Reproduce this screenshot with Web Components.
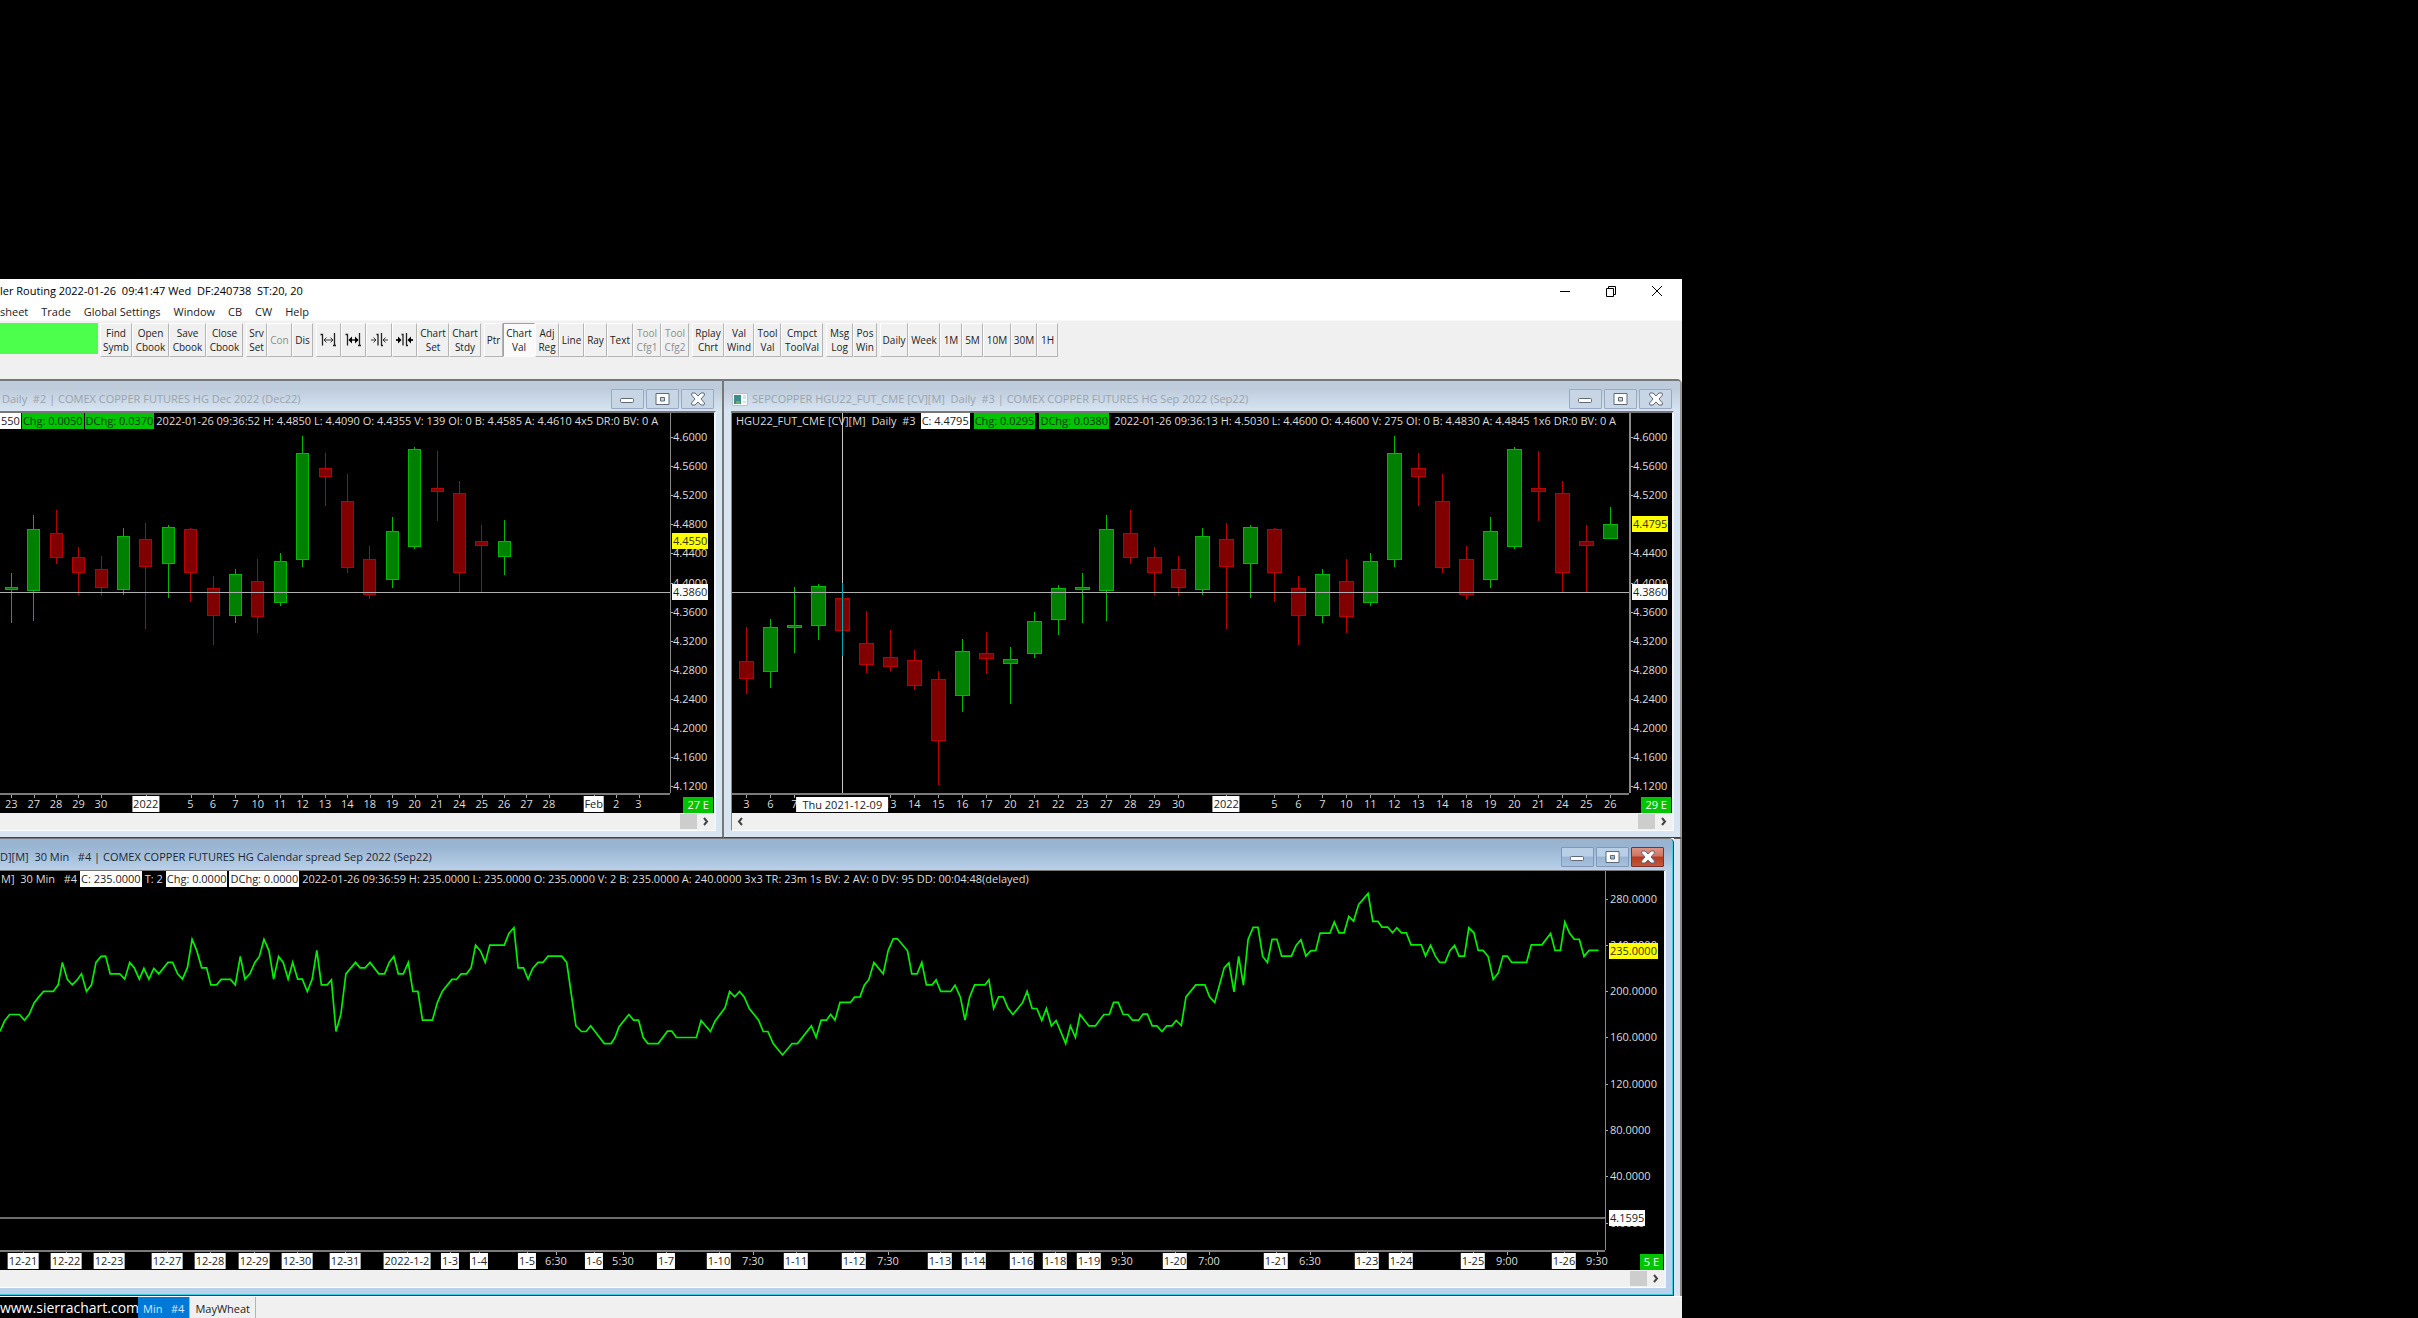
<!DOCTYPE html>
<html lang="en">
<head>
<meta charset="utf-8">
<title>Sierra Chart</title>
<style>
  body { margin: 0; background: #000; font: 11px/14px "Open Sans", "Noto Sans", sans-serif; color: #222; }
</style>
</head>
<body>
<trading-desktop>
  <title-bar slot="bar">ler Routing 2022-01-26&nbsp; 09:41:47 Wed&nbsp; DF:240738&nbsp; ST:20, 20</title-bar>
  <menu-bar slot="bar"></menu-bar>
  <tool-bar slot="bar"></tool-bar>
  <mdi-window slot="left" caption="Daily&nbsp; #2 | COMEX COPPER FUTURES HG Dec 2022 (Dec22)">
    <price-chart data-chart="dec"></price-chart>
  </mdi-window>
  <mdi-window slot="right" framed icon caption="SEPCOPPER HGU22_FUT_CME [CV][M]&nbsp; Daily&nbsp; #3 | COMEX COPPER FUTURES HG Sep 2022 (Sep22)">
    <price-chart data-chart="sep"></price-chart>
  </mdi-window>
  <mdi-window slot="bottom" active caption="D][M]&nbsp; 30 Min&nbsp;&nbsp; #4 | COMEX COPPER FUTURES HG Calendar spread Sep 2022 (Sep22)">
    <price-chart data-chart="spread"></price-chart>
  </mdi-window>
  <tab-bar slot="tabs"></tab-bar>
</trading-desktop>

<script>
class Base extends HTMLElement {
  paint(html) {
    if (!this.shadowRoot) this.attachShadow({ mode: 'open' });
    this.shadowRoot.innerHTML = html;
  }
}

customElements.define('trading-desktop', class extends Base {
  connectedCallback() {
    this.paint(`<style>
      :host { display: grid; grid-template-columns: 1682fr 736fr; grid-template-rows: 279fr 1039fr; min-height: 100vh; background: #000; }
      main { grid-row: 2; display: flex; flex-direction: column; min-width: 0; background: #f0f0f0; overflow: hidden; }
      .mdi { flex: 1; display: grid; grid-template-columns: 724fr 958fr; grid-template-rows: 1fr 1fr; min-height: 0; border-bottom: 1px solid #fff; }
      .wide { grid-column: 1 / -1; display: flex; min-width: 0; min-height: 0; }
      .wide slot::slotted(*) { flex: 1; }
      .behind { width: 6px; background: #d9e5f2; border-right: 2px solid #8c8c8c; border-top: 1px solid #555; }
    </style>
    <main>
      <slot name="bar"></slot>
      <div class="mdi">
        <slot name="left"></slot><slot name="right"></slot>
        <div class="wide"><slot name="bottom"></slot><div class="behind"></div></div>
      </div>
      <slot name="tabs"></slot>
    </main>`);
  }
});

customElements.define('title-bar', class extends Base {
  connectedCallback() {
    this.paint(`<style>
      :host { display: flex; align-items: center; height: 24px; padding-right: 2px; background: #fff; color: #000; white-space: nowrap; }
      span { flex: 1; }
      button { width: 46px; height: 24px; padding: 0; border: 0; background: none; display: grid; place-items: center; }
      svg { fill: none; stroke: #000; }
    </style>
    <span><slot></slot></span>
    <button aria-label="Minimize"><svg width="12" height="12"><path d="M1 6.5h10"/></svg></button>
    <button aria-label="Restore"><svg width="12" height="12"><path d="M1.5 3.5h7v8h-7zM3.5 3.5v-2h7v8h-2"/></svg></button>
    <button aria-label="Close"><svg width="12" height="12"><path d="M1 1l10 10M11 1L1 11"/></svg></button>`);
  }
});

customElements.define('menu-bar', class extends Base {
  connectedCallback() {
    const items = ['sheet', 'Trade', 'Global Settings', 'Window', 'CB', 'CW', 'Help'];
    this.paint(`<style>
      :host { display: block; background: #fff; border-bottom: 1px solid #f7f7f7; }
      nav { display: flex; gap: 13px; height: 16px; padding-top: 1px; }
      button { font: inherit; color: #222; padding: 0; border: 0; background: none; white-space: nowrap; }
    </style><nav>${items.map(i => `<button>${i}</button>`).join('')}</nav>`);
  }
});

const scaleIcon = inner => `<svg width="17" height="18" viewBox="0 0 17 18" fill="none" stroke="#222">${inner}</svg>`;
const ICONS = {
  widen: scaleIcon('<path d="M0.5 3.5h2v11M14.5 2v12.5M16 14.5h-3" stroke-width="1.3"/><path d="M4 9h9M6.5 6.5L4 9l2.500 2.500M10.500 6.500L13 9l-2.500 2.500" stroke-width=".9"/>'),
  widenBold: scaleIcon('<path d="M0.5 3.5h2v11M14.5 2v12.5M16 14.5h-3" stroke-width="1.3"/><path d="M4 9h9" stroke-width="1.5"/><path d="M3.500 9l3.500-3.500v7zM13.500 9L10 5.500v7z" fill="#000" stroke="none"/>'),
  narrow: scaleIcon('<path d="M5.500 3.500h1.500v11M10.500 2v12.500M12 14.500h-2" stroke-width="1.3"/><path d="M0 9h5M2.500 6.500L5 9l-2.500 2.500M17 9h-5M14.500 6.500L12 9l2.500 2.500" stroke-width=".9"/>'),
  narrowBold: scaleIcon('<path d="M5.500 3.500h1.500v11M10.500 2v12.500M12 14.500h-2" stroke-width="1.3"/><path d="M0 9h3M17 9h-3" stroke-width="2"/><path d="M5.500 9L2 5.500v7zM11.500 9L15 5.500v7z" fill="#000" stroke="none"/>')
};

customElements.define('tool-bar', class extends Base {
  connectedCallback() {
    const groups = [
      [['Find|Symb', 32], ['Open|Cbook', 37], ['Save|Cbook', 37], ['Close|Cbook', 37]],
      [['Srv|Set', 21], ['Con', 25, 'off'], ['Dis', 21]],
      [['*widen', 25], ['*widenBold', 25], ['*narrow', 26], ['*narrowBold', 25], ['Chart|Set', 32], ['Chart|Stdy', 32]],
      [['Ptr', 19], ['Chart|Val', 32, 'on'], ['Adj|Reg', 24], ['Line', 25], ['Ray', 23], ['Text', 26], ['Tool|Cfg1', 28, 'off'], ['Tool|Cfg2', 28, 'off']],
      [['Rplay|Chrt', 32], ['Val|Wind', 30], ['Tool|Val', 27], ['Cmpct|ToolVal', 42]],
      [['Msg|Log', 27], ['Pos|Win', 24]],
      [['Daily', 28], ['Week', 32], ['1M', 22], ['5M', 21], ['10M', 28], ['30M', 26], ['1H', 21]]
    ];
    const button = ([t, w, state]) => {
      const body = t[0] === '*' ? ICONS[t.slice(1)] : t.replace('|', '<br>');
      return `<button class="${state || ''}" style="width:${w}px" ${state === 'off' ? 'disabled' : ''} ${t[0] === '*' ? `aria-label="${t.slice(1)}"` : ''}>${body}</button>`;
    };
    this.paint(`<style>
      :host { display: flex; gap: 3px; height: 56px; padding-top: 2px; align-items: flex-start; background: #f0f0f0; }
      .status { width: 98px; height: 31px; background: #4dff4d; margin-right: -1px; }
      .group { display: flex; }
      button { box-sizing: border-box; height: 34px; padding: 0; border: 1px solid; border-color: #fdfdfd #b4b4b4 #b4b4b4 #fdfdfd; background: #f0f0f0;
        font: inherit; font-size: 10px; color: #222; white-space: nowrap; display: flex; align-items: center; justify-content: center; text-align: center; }
      .off { color: #8d8d8d; }
      .on { background: #fafafa; border-color: #a0a0a0 #fafafa #fafafa #a0a0a0; }
    </style>
    <div class="status"></div>${groups.map(g => `<div class="group">${g.map(button).join('')}</div>`).join('')}`);
  }
});

customElements.define('mdi-window', class extends Base {
  connectedCallback() {
    const icon = this.hasAttribute('icon')
      ? '<svg width="16" height="14"><path d="M.5.500h15v12H.5z" fill="#f8f8f8" stroke="#b8c2cc"/><path d="M2 2h7v9H2z" fill="#3c8c8c"/><path d="M4 8h4v3H4z" fill="#64b464"/><path d="M11 3h3M11 5h3M11 9h3" stroke="#c0c8d0"/></svg>' : '';
    const ink = 'fill="#fff" stroke="#5d6878"';
    this.paint(`<style>
      :host { --frame: #d7e4f2; --top: #bdcbdb; --text: #9ba3ac;
        display: flex; flex-direction: column; min-width: 0; min-height: 0; box-sizing: border-box; overflow: hidden;
        border-top: 2px solid #777; border-right: 2px solid #777; border-bottom: 1px solid #444; background: var(--frame); padding: 0 6px 6px 0; }
      :host([framed]) { padding-left: 7px; border-top-right-radius: 5px; border-right-color: #999; }
      :host([active]) { --frame: #b9d1ea; --top: #99b4d1; --text: #1c2733; border-top-width: 1px; border-right: 1px solid #2b4652; border-bottom: 1px solid #2b4652;
        box-shadow: inset -1px -1px #43cbe0; padding: 0 7px 7px 0; border-top-right-radius: 5px; }
      header { display: flex; gap: 2px; height: 30px; margin-right: -6px; padding-right: 8px; background: linear-gradient(var(--top), var(--top) 25%, var(--frame)); }
      :host([framed]) header { margin-left: -7px; padding-left: 8px; }
      :host([active]) header { height: 31px; }
      h2 { flex: 1; margin: 0; font: inherit; line-height: 36px; color: var(--text); white-space: nowrap; padding-left: 2px; }
      :host([active]) h2 { padding-left: 0; }
      header > svg { margin-top: 12px; }
      button { box-sizing: border-box; width: 33px; height: 20px; margin-top: 8px; padding: 0; border: 1px solid #98a9c2; border-radius: 1px; background: #c8d5e4; display: grid; place-items: center; }
      :host([active]) button { background: linear-gradient(#b9cfe6 45%, #98b4d2 50%, #a6c1dd); border-color: #8098b8; }
      :host([active]) button.close { background: linear-gradient(#dd9484, #cf7463 45%, #b43a20 50%, #c4593a); border-color: #7c3038; }
      .client { flex: 1; display: flex; flex-direction: column; min-height: 0; border-top: 2px solid #777; border-right: 2px solid #f1f5fa; border-bottom: 1px solid #fff; }
      :host([framed]) .client { border-left: 1px solid #888; }
      :host([active]) .client { border-top-width: 1px; }
      .chart { flex: 1; display: flex; min-height: 0; }
      slot::slotted(*) { flex: 1; min-width: 0; }
    </style>
    <header>${icon}<h2>${this.getAttribute('caption')}</h2>
      <button aria-label="Minimize"><svg width="15" height="14"><rect x=".5" y="6.500" width="13" height="4" rx="1" ${ink}/></svg></button>
      <button aria-label="Maximize"><svg width="15" height="14"><path fill-rule="evenodd" d="M1 1.500h13v11H1zM5.500 5.500v3.500h4V5.500z" ${ink}/></svg></button>
      <button class="close" aria-label="Close"><svg width="16" height="14"><path d="M2 1h3l3 3 3-3h3l.5 2L11 7l3.500 4-.5 2h-3L8 10l-3 3H2l-.5-2L5 7 1.500 3z" ${ink}/></svg></button>
    </header>
    <div class="client"><div class="chart"><slot></slot></div><scroll-strip ${this.hasAttribute('framed') ? 'start' : ''}></scroll-strip></div>`);
  }
});

customElements.define('scroll-strip', class extends Base {
  connectedCallback() {
    const chevron = d => `<svg width="7" height="9"><path d="${d}" fill="none" stroke="#444" stroke-width="2"/></svg>`;
    this.paint(`<style>
      :host { display: flex; height: 17px; flex: none; background: #f0f0f0; align-items: center; }
      button { width: 17px; height: 17px; padding: 0; border: 0; background: none; display: grid; place-items: center; }
      .track { flex: 1; display: flex; justify-content: flex-end; }
      .thumb { width: 17px; height: 15px; background: #cdcdcd; }
    </style>
    ${this.hasAttribute('start') ? `<button aria-label="Scroll left">${chevron('M5 1L2 4.500L5 8')}</button>` : ''}
    <div class="track"><div class="thumb"></div></div>
    <button aria-label="Scroll right">${chevron('M2 1l3 3.500L2 8')}</button>`);
  }
});

/* Daily bars: direction, high, body top, body bottom, low (thirds of a pixel below the top label). */
const BARS = `r621,722,776,822 g597,622,755,803 g501,616,623,698 g492,499,618,659 r489,535,632,707 r573,670,734,759
r630,712,740,753 r690,720,797,809 r753,778,962,1095 g657,694,827,875 r636,700,716,762 g681,718,731,852
g576,603,702,714 g496,504,599,644 g460,502,509,608 g285,328,513,604 r270,340,413,433 r381,412,459,524
r408,448,503,529 g324,348,509,525 r309,357,440,626 g314,321,433,533 r325,328,458,546 r468,505,587,674
g448,463,587,609 r417,483,592,638 g400,423,548,558 g48,100,419,440 r100,144,170,258 r162,242,443,458
r378,418,524,536 g291,334,479,504 g81,88,380,388 r93,205,217,302 r184,220,460,516 r316,364,377,518`.split(/\s+/);

const dailyPrices = skip => Array.from({ length: 13 }, (_, i) => 4.6 - i * 0.04)
  .filter(p => Math.abs(p - skip) > 0.001).map(p => [p.toFixed(4), 24 + (4.6 - p) * 726.5]);

const candles = (bars, x0, step, w) => bars.map((b, i) => {
  const [h, t, bt, l] = b.slice(1).split(',').map(v => Math.round(7 + v / 3));
  const cx = Math.round(x0 + i * step), up = b[0] === 'g';
  const line = up ? '#00b800' : '#b80000', fill = up ? '#008000' : '#800000';
  return `<path d="M${cx + .5} ${h}V${l}" stroke="${line}"/><rect x="${cx - (w - 1) / 2 + .5}" y="${t + .5}" width="${w - 1}" height="${Math.max(1, bt - t - 1)}" fill="${fill}" stroke="${line}"/>`;
}).join('');

const SPREAD = [
  [0, 2.6133, `0,604 12,572 25,553 51,553 64,570 76,553 89,518 101,501 114,484 139,484 152,464 163,397 176,448 189,464 201,450 213,431 226,484 239,464 251,397 264,379 276,378 288,431 313,431 326,447 339,397 351,413 364,447 376,415 389,447 402,415 415,431 439,397 451,397 464,431 477,447 490,412 502,328 514,361 527,413 540,413 551,464 566,464 578,448 602,448 615,464 628,379 640,447 653,431 666,397 678,379 690,328 703,362 715,447 728,379 740,397 753,447 765,397 778,447 790,447 803,484 816,447 828,361 840,464 855,464 866,449 878,604 891,552 904,431 929,397 941,413 954,413 967,397 990,431 1005,431 1017,397 1029,379 1041,431 1054,431 1067,397 1079,484 1092,484 1104,570 1130,570 1143,517 1156,483 1181,448 1193,448 1205,431 1219,431 1231,413 1243,345 1256,363 1268,397 1280,345 1318,345 1330,310 1343,293 1354,413 1368,413 1380,447 1392,415 1406,397 1419,397 1432,378 1468,378 1481,397 1494,500 1505,587`],
  [580, 2.8, `4,604 17,604 30,587 42,604 68,640 87,640 98,622 109,590 137,553 150,570 164,570 177,622 190,640 219,640 245,603 257,603 270,622 326,622 339,571 365,604 378,573 406,533 419,484 433,500 447,484 460,501 474,535 500,570 513,604 526,604 541,640 567,674 594,640 609,640 648,587 661,622 675,570 690,570 702,553 714,570 728,517 757,517 769,501 784,500 796,465 809,448 823,397 849,431 863,361 877,326 889,326 917,362 929,431 944,431 957,397 970,464 986,464 997,449 1010,484 1038,484 1050,465 1065,501 1078,570 1091,501 1105,464 1134,464 1145,449 1158,535 1172,500 1185,500 1199,535 1212,553 1239,518 1252,484 1266,535 1279,535 1293,571 1306,535 1320,587 1333,571 1360,640 1373,587 1387,622 1400,553 1425,587 1443,587 1467,553 1482,553 1494,517 1507,517 1521,553 1534,553 1547,570`],
  [1130, 2.7509, `8,570 24,570 36,552 48,552 61,587 74,587 88,604 101,587 115,587 127,571 141,586 154,500 181,464 206,464 219,500 233,517 259,413 272,398 286,485 299,379 312,465 325,328 339,292 352,292 365,379 378,397 391,328 404,328 417,378 444,378 457,346 470,329 484,378 497,362 511,361 523,309 550,309 562,276 575,308 589,308 602,259 615,273 629,223 655,190 668,274 682,274 693,291 709,291 722,308 734,293 747,308 760,308 773,344 801,344 813,378 827,346 840,378 852,397 867,397 880,362 893,346 905,378 920,378 932,293 946,308 958,361 971,361 985,379 999,448 1013,429 1026,378 1038,378 1050,397 1091,397 1104,344 1133,344 1157,310 1169,361 1184,361 1196,276 1209,309 1222,327 1236,328 1249,379 1263,361 1289,361`]
].flatMap(([x0, s, pts]) => pts.split(' ').map(p => {
  const [u, v] = p.split(',').map(Number);
  return `${(x0 + u / s).toFixed(1)},${(v / 3 - 41).toFixed(1)}`;
})).join(' ');

const days = (names, x0, step) => names.split(' ').map((n, i) => [n, x0 + i * step, n === '2022' || n === 'Feb']).filter(d => d[0] !== '-');

const CHARTS = {
  dec: {
    w: 670, axis: 44, badge: '27 E', axisLine: 1, gap: 1,
    head: [['w', '550'], ['g', 'Chg: 0.0050'], ['g', 'DChg: 0.0370'], ['', '2022-01-26 09:36:52 H: 4.4850 L: 4.4090 O: 4.4355 V: 139 OI: 0 B: 4.4585 A: 4.4610 4x5 DR:0 BV: 0 A']],
    prices: dailyPrices(0),
    marks: [['y', '4.4550', 128], ['w', '4.3860', 179]],
    dates: days('23 27 28 29 30 - 2022 - 5 6 7 10 11 12 13 14 18 19 20 21 24 25 26 27 28 - Feb 2 3', 11.3, 22.4),
    plot: () => candles([...BARS.slice(14), 'g299,364,410,464'], 11, 22.4, 13) + '<path d="M0 179.500H670" stroke="#b0b0b0"/>'
  },
  sep: {
    w: 897, axis: 43, badge: '29 E', axisLine: 2, lead: 3, gap: 4, tip: ['Thu 2021-12-09', 110.3],
    head: [['', 'HGU22_FUT_CME [CV][M]&nbsp; Daily&nbsp; #3'], ['w', 'C: 4.4795'], ['g', 'Chg: 0.0295'], ['g', 'DChg: 0.0380'], ['', '2022-01-26 09:36:13 H: 4.5030 L: 4.4600 O: 4.4600 V: 275 OI: 0 B: 4.4830 A: 4.4845 1x6 DR:0 BV: 0 A']],
    prices: dailyPrices(4.48),
    marks: [['y', '4.4795', 111], ['w', '4.3860', 179]],
    dates: days('3 6 7 - - - 13 14 15 16 17 20 21 22 23 27 28 29 30 - 2022 - 5 6 7 10 11 12 13 14 18 19 20 21 24 25 26', 14.3, 24),
    plot: () => candles([...BARS, 'g261,312,356,356'], 14, 24, 15) +
      '<path d="M0 179.500H897" stroke="#b0b0b0"/><path d="M110.500 0V379" stroke="#c4c4c4"/><path d="M110.500 170V243" stroke="#00a8b0"/>'
  },
  spread: {
    w: 1605, axis: 59, badge: '5 E', axisLine: 1, labelPad: 3, gap: 2,
    head: [['', 'M]&nbsp; 30 Min&nbsp;&nbsp; #4'], ['w', 'C: 235.0000'], ['', 'T: 2'], ['w', 'Chg: 0.0000'], ['w', 'DChg: 0.0000'], ['', '2022-01-26 09:36:59 H: 235.0000 L: 235.0000 O: 235.0000 V: 2 B: 235.0000 A: 240.0000 3x3 TR: 23m 1s BV: 2 AV: 0 DV: 95 DD: 00:04:48(delayed)']],
    prices: [280, 240, 200, 160, 120, 80, 40, 0].map(p => [p.toFixed(4), 28 + (280 - p) * 1.156]),
    marks: [['y', '235.0000', 80], ['w', '4.1595', 347]],
    dates: [['12-21', 23], ['12-22', 66], ['12-23', 109], ['12-27', 167], ['12-28', 210], ['12-29', 254], ['12-30', 297], ['12-31', 345], ['2022-1-2', 407], ['1-3', 450], ['1-4', 479], ['1-5', 527], ['6:30', 556], ['1-6', 594], ['5:30', 623], ['1-7', 666], ['1-10', 719], ['7:30', 753], ['1-11', 796], ['1-12', 854], ['7:30', 888], ['1-13', 940], ['1-14', 974], ['1-16', 1022], ['1-18', 1055], ['1-19', 1089], ['9:30', 1122], ['1-20', 1175], ['7:00', 1209], ['1-21', 1276], ['6:30', 1310], ['1-23', 1367], ['1-24', 1401], ['1-25', 1473], ['9:00', 1507], ['1-26', 1564], ['9:30', 1597]].map(([n, x]) => [n, x, n.includes('-')]),
    plot: () => `<polyline points="${SPREAD}" fill="none" stroke="#00f000" stroke-width="1.700" shape-rendering="auto"/><path d="M0 347H1605" stroke="#6c6c6c" stroke-width="2"/>`
  }
};

customElements.define('price-chart', class extends Base {
  connectedCallback() {
    const c = CHARTS[this.dataset.chart], H = 379;
    const px = x => (x / c.w * 100).toFixed(3) + '%', py = y => (y / H * 100).toFixed(3) + '%';
    this.paint(`<style>
      :host { display: grid; grid-template-columns: 1fr ${c.axis}px; grid-template-rows: 1fr 20px; background: #000; color: #dcdcdc; white-space: nowrap; overflow: hidden; }
      .plot, .head { grid-area: 1 / 1; min-width: 0; min-height: 0; }
      .plot svg { display: block; width: 100%; height: 100%; }
      .plot { contain: size; }
      .head { display: flex; gap: ${c.gap}px; height: 16px; line-height: 15px; overflow: hidden; padding-left: ${c.lead || 0}px; }
      .head span { padding: 0 1px; }
      .w { background: #fff; color: #222; }
      .g { background: #00c400; color: #003800; }
      .y { background: #ff0; color: #333300; }
      .prices, .dates { position: relative; }
      .prices { border-left: ${c.axisLine}px solid #8a8a8a; }
      .prices span, .dates span { position: absolute; line-height: 16px; }
      .prices span { left: ${c.labelPad || 1}px; transform: translateY(-50%); padding: 0 1px; }
      .prices i, .dates i { position: absolute; background: #aaa; }
      .prices i { left: 0; width: 2px; height: 1px; }
      .dates { border-top: 2px solid #7a7a7a; }
      .dates i { top: 0; width: 1px; height: 3px; }
      .dates span { top: 1px; transform: translateX(-50%); padding: 0 1px; }
      .dates .tip { top: 2px; background: #fff; color: #222; padding: 0 6px; line-height: 15px; }
      .badge { justify-self: end; align-self: end; margin-right: 1px; padding: 0 4px; line-height: 16px; background: #00c400; color: #fff; }
    </style>
    <div class="plot"><svg viewBox="0 0 ${c.w} ${H}" preserveAspectRatio="none" shape-rendering="crispEdges">${c.plot()}</svg></div>
    <div class="head">${c.head.map(([k, t]) => `<span class="${k}">${t}</span>`).join('')}</div>
    <div class="prices">${c.prices.map(([t, y]) => `<i style="top:${py(y)}"></i><span style="top:${py(y)}">${t}</span>`).join('')}
      ${c.marks.map(([k, t, y]) => `<span class="${k}" style="top:${py(y)}">${t}</span>`).join('')}</div>
    <div class="dates">${c.dates.map(([t, x, hot]) => `<i style="left:${px(x)}"></i><span class="${hot ? 'w' : ''}" style="left:${px(x)}">${t}</span>`).join('')}
      ${c.tip ? `<span class="tip" style="left:${px(c.tip[1])}">${c.tip[0]}</span>` : ''}</div>
    <div class="badge">${c.badge}</div>`);
  }
});

customElements.define('tab-bar', class extends Base {
  connectedCallback() {
    this.paint(`<style>
      :host { display: flex; height: 21px; background: #f0f0f0; white-space: nowrap; overflow: hidden; }
      a { width: 138px; background: #000; color: #fff; font-size: 14px; line-height: 22px; text-decoration: none; overflow: hidden; }
      button { font: inherit; border: 0; padding: 2px 5px 0; background: none; color: #222; border-right: 1px solid #b4b4b4; }
      .on { background: #0078d7; color: #d0e8ff; }
    </style>
    <a href="#site">www.sierrachart.com</a><button class="on">Min&nbsp;&nbsp; #4</button><button>MayWheat</button>`);
  }
});
</script>
</body>
</html>
